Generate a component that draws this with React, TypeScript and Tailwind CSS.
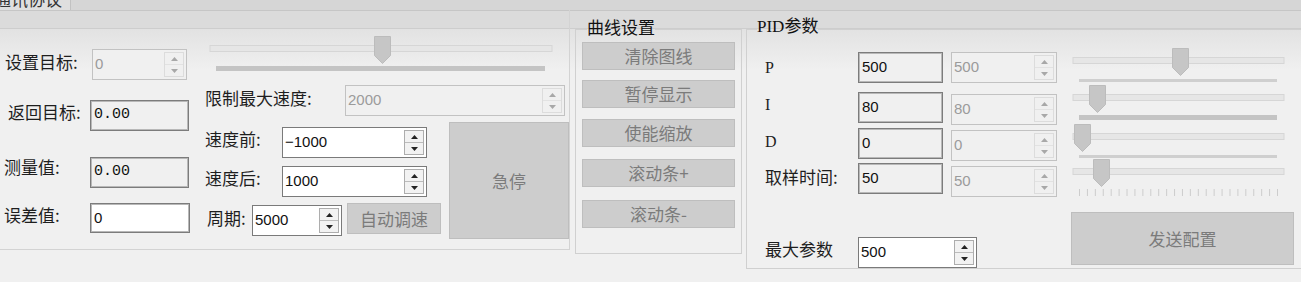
import React from "react";

const CJK = "font-['Noto_Sans_CJK_SC',sans-serif]";
const NUM = "font-['Liberation_Sans','Noto_Sans_CJK_SC',sans-serif]";
const MONO = "font-['Liberation_Mono',monospace]";
const SERIF = "font-['Liberation_Serif','Noto_Sans_CJK_SC',serif]";

function Tri({ up, color }: { up?: boolean; color: string }) {
  return (
    <svg width="7" height="4" viewBox="0 0 7 4">
      <path d={up ? "M3.5 0L7 4H0z" : "M0 0H7L3.5 4z"} fill={color} />
    </svg>
  );
}

function Spinner({ disabled }: { disabled?: boolean }) {
  const c = disabled ? "#a8a8a8" : "#222";
  return (
    <div
      className={`w-[20px] my-[2px] mr-[2px] flex flex-col border ${
        disabled ? "border-[#dcdcdc]" : "border-[#adadad]"
      }`}
    >
      <div
        className={`flex-1 flex items-center justify-center border-b ${
          disabled ? "border-[#e2e2e2] bg-[#f0f0f0]" : "border-[#bcbcbc] bg-[#f2f2f2]"
        }`}
      >
        <Tri up color={c} />
      </div>
      <div
        className={`flex-1 flex items-center justify-center ${
          disabled ? "bg-[#f0f0f0]" : "bg-[#f2f2f2]"
        }`}
      >
        <Tri color={c} />
      </div>
    </div>
  );
}

function NUD({ cls, value, disabled }: { cls: string; value: string; disabled?: boolean }) {
  return (
    <div
      className={`${cls} h-[31px] flex border ${
        disabled ? "border-[#c2c2c2] bg-[#f0f0f0]" : "border-[#7a7a7a] bg-white"
      }`}
    >
      <div
        className={`flex-1 pl-[2px] flex items-center ${NUM} text-[15px] ${
          disabled ? "text-[#9b9b9b]" : "text-[#111]"
        }`}
      >
        {value}
      </div>
      <Spinner disabled={disabled} />
    </div>
  );
}

function TB({ cls, value, white, mono }: { cls: string; value: string; white?: boolean; mono?: boolean }) {
  return (
    <div
      className={`${cls} flex items-center border border-[#7c7c7c] shadow-[inset_0_0_0_1px_#b8b8b8] pl-[3px] text-[15px] text-[#111] ${
        white ? "bg-white" : "bg-[#f0f0f0]"
      } ${mono ? MONO : NUM}`}
    >
      {value}
    </div>
  );
}

function Btn({ cls, children }: { cls: string; children: React.ReactNode }) {
  return (
    <button
      type="button"
      disabled
      className={`${cls} flex items-center justify-center bg-[#cdcdcd] border border-[#bebebe] ${CJK} text-[17px] text-[#7b7b7b]`}
    >
      {children}
    </button>
  );
}

function Label({ cls, children }: { cls: string; children: React.ReactNode }) {
  return <div className={`${cls} ${CJK} text-[17px] leading-[20px] text-[#1e1e1e] whitespace-nowrap`}>{children}</div>;
}

function TrackBar({
  width,
  height,
  thumb,
  tick,
}: {
  width: number;
  height: number;
  thumb: number;
  tick: "thin" | "thick" | "dots";
}) {
  const t1 = 8;
  const t2 = width - 9;
  const ticks: number[] = [];
  if (tick === "dots") {
    const n = 25;
    for (let i = 0; i <= n; i++) ticks.push(t1 + ((t2 - t1) * i) / n);
  }
  return (
    <svg width={width} height={height} viewBox={`0 0 ${width} ${height}`} className="block">
      <rect x="2" y="10.5" width={width - 4} height="6" fill="#e6e6e6" stroke="#d6d6d6" />
      {tick === "thin" && <rect x={t1} y="32" width={t2 - t1} height="3" fill="#cfcfcf" />}
      {tick === "thick" && <rect x={t1} y="31" width={t2 - t1} height="5" fill="#c4c4c4" />}
      {tick === "dots" &&
        ticks.map((x, i) => <rect key={i} x={x} y="31" width="1" height="7" fill="#cdcdcd" />)}
      <path d={`M${thumb + 0.5} 1.5h16v19l-8 8l-8 -8z`} fill="#c6c6c6" stroke="#bcbcbc" />
    </svg>
  );
}

function LeftPanel() {
  return (
    <div className="w-[570px] h-[240px] shrink-0 border-r border-b border-[#d3d3d3] flex">
      <div className="w-[205px] flex flex-col">
        <div className="mt-[39px] flex items-start h-[31px]">
          <Label cls="pl-[5px] w-[92px] mt-[3px]">设置目标:</Label>
          <NUD cls="w-[95px]" value="0" disabled />
        </div>
        <div className="mt-[20px] flex items-start h-[31px]">
          <Label cls="pl-[8px] w-[90px] mt-[2px]">返回目标:</Label>
          <TB cls="w-[99px] h-[31px]" value="0.00" mono />
        </div>
        <div className="mt-[26px] flex items-start h-[31px]">
          <Label cls="pl-[4px] w-[90px] mt-[0px]">测量值:</Label>
          <TB cls="w-[99px] h-[31px]" value="0.00" mono />
        </div>
        <div className="mt-[15px] flex items-start h-[30px]">
          <Label cls="pl-[4px] w-[90px] mt-[2px]">误差值:</Label>
          <TB cls="w-[100px] h-[30px]" value="0" white />
        </div>
      </div>
      <div className="w-[364px] flex flex-col">
        <div className="ml-[3px] mt-[25px]">
          <TrackBar width={346} height={40} thumb={166} tick="thick" />
        </div>
        <div className="mt-[10px] flex items-start h-[31px]">
          <Label cls="w-[140px] mt-[3px]">限制最大速度:</Label>
          <NUD cls="w-[220px]" value="2000" disabled />
        </div>
        <div className="mt-[5px] flex items-start">
          <div className="w-[244px] flex flex-col">
            <div className="mt-[6px] flex items-start h-[31px]">
              <Label cls="w-[77px] mt-[2px]">速度前:</Label>
              <NUD cls="w-[145px]" value="−1000" />
            </div>
            <div className="mt-[8px] flex items-start h-[31px]">
              <Label cls="w-[77px] mt-[2px]">速度后:</Label>
              <NUD cls="w-[145px]" value="1000" />
            </div>
            <div className="mt-[6px] flex items-start h-[33px]">
              <Label cls="pl-[2px] w-[47px] mt-[5px]">周期:</Label>
              <div className="mt-[2px]">
                <NUD cls="w-[90px]" value="5000" />
              </div>
              <Btn cls="ml-[5px] w-[94px] h-[31px]">自动调速</Btn>
            </div>
          </div>
          <Btn cls="mt-[1px] w-[120px] h-[117px]">急停</Btn>
        </div>
      </div>
    </div>
  );
}

function CurveGroup() {
  const btns = [
    { t: "清除图线", m: "mt-[1px]" },
    { t: "暂停显示", m: "mt-[10px]" },
    { t: "使能缩放", m: "mt-[11px]" },
    { t: "滚动条+", m: "mt-[12px]" },
    { t: "滚动条-", m: "mt-[13px]" },
  ];
  return (
    <fieldset className="ml-[5px] mt-[7px] w-[167px] h-[237px] shrink-0 border border-[#d0d0d0]">
      <legend className={`ml-[11px] pb-[4px] ${CJK} text-[17px] leading-[20px] text-[#111]`}>曲线设置</legend>
      <div className="flex flex-col pl-[6px]">
        {btns.map((b) => (
          <Btn key={b.t} cls={`${b.m} w-[153px] h-[28px]`}>
            {b.t}
          </Btn>
        ))}
      </div>
    </fieldset>
  );
}

function PidRow({
  label,
  serif,
  v,
  rowMt,
  labelMt,
  nudMt,
}: {
  label: string;
  serif?: boolean;
  v: string;
  rowMt: string;
  labelMt: string;
  nudMt: string;
}) {
  return (
    <div className={`${rowMt} flex items-start h-[31px] pl-[18px]`}>
      <div
        className={`w-[93px] h-[31px] flex items-center ${labelMt} ${
          serif ? `${SERIF} text-[16px]` : `${CJK} text-[17px]`
        } text-[#1e1e1e]`}
      >
        {label}
      </div>
      <TB cls="w-[85px] h-[31px]" value={v} />
      <div className={`ml-[8px] ${nudMt}`}>
        <NUD cls="w-[106px]" value={v} disabled />
      </div>
    </div>
  );
}

function PidGroup() {
  return (
    <fieldset className="ml-[4px] mt-[7px] w-[580px] h-[252px] shrink-0 border border-[#d0d0d0]">
      <legend className={`ml-[10px] pb-[4px] ${SERIF} text-[17px] leading-[20px] text-[#111]`}>PID参数</legend>
      <div className="flex items-start">
        <div className="w-[324px] flex flex-col">
          <PidRow label="P" serif v="500" rowMt="mt-[11px]" labelMt="mt-[0px]" nudMt="mt-[0px]" />
          <PidRow label="I" serif v="80" rowMt="mt-[9px]" labelMt="-mt-[3px]" nudMt="mt-[2px]" />
          <PidRow label="D" serif v="0" rowMt="mt-[5px]" labelMt="-mt-[2px]" nudMt="mt-[2px]" />
          <PidRow label="取样时间:" v="50" rowMt="mt-[4px]" labelMt="-mt-[2px]" nudMt="mt-[3px]" />
          <div className="mt-[43px] flex items-start h-[31px] pl-[18px]">
            <div className={`w-[93px] h-[31px] -mt-[4px] flex items-center ${CJK} text-[17px] text-[#1e1e1e]`}>最大参数</div>
            <NUD cls="w-[119px]" value="500" />
          </div>
        </div>
        <div className="flex flex-col">
          <div className="mt-[6px]">
            <TrackBar width={215} height={37} thumb={101} tick="thin" />
          </div>
          <TrackBar width={215} height={39} thumb={18} tick="thick" />
          <TrackBar width={215} height={35} thumb={3} tick="thin" />
          <TrackBar width={215} height={40} thumb={22} tick="dots" />
          <Btn cls="mt-[14px] w-[223px] h-[53px]">发送配置</Btn>
        </div>
      </div>
    </fieldset>
  );
}

export default function App() {
  return (
    <div className="w-[1301px] h-[301px] bg-white overflow-hidden">
      <div className="h-[282px] bg-[#f0f0f0] flex flex-col overflow-hidden">
        <div className="h-[10px] shrink-0 bg-[#d6d6d6] flex overflow-hidden">
          <div className="w-[71px] h-[10px] bg-[#dfdfdf] border-r border-[#c2c2c2] overflow-hidden">
            <div className={`${CJK} text-[17px] leading-[20px] -mt-[11px] -ml-[6px] text-[#333] whitespace-nowrap`}>
              通讯协议
            </div>
          </div>
        </div>
        <div className="flex-1 flex items-start overflow-hidden bg-[linear-gradient(to_bottom,#c6c6c6_0px,#c6c6c6_1px,#dbdbdb_1px,#dbdbdb_18px,#cdcdcd_18px,#cdcdcd_19px,#e2e2e2_19px,#f0f0f0_60px)]">
          <LeftPanel />
          <CurveGroup />
          <PidGroup />
        </div>
      </div>
    </div>
  );
}
